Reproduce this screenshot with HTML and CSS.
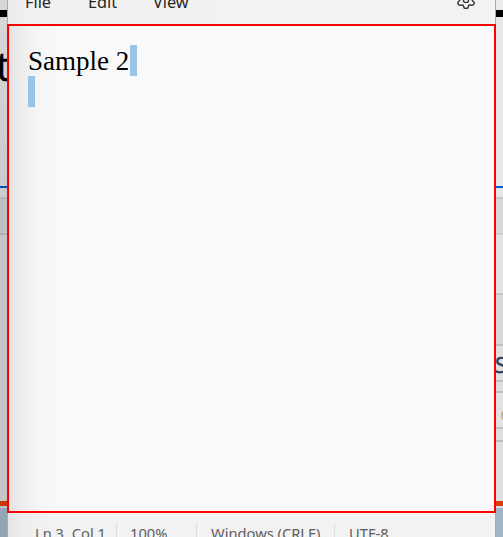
FILE: index.html
```
<!DOCTYPE html>
<html lang="en">
<head>
<meta charset="utf-8">
<title>Notepad</title>
<link rel="stylesheet" href="styles.css">
</head>
<body>
<div class="desktop">
  <aside class="behind left">
    <i class="gap-a"></i><i class="black"></i><span class="letter big">t</span>
    <i class="blue"></i><i class="row-a"></i><i class="row-b"></i><i class="row-c"></i><i class="orange"></i><i class="task"></i>
  </aside>
  <main class="window">
    <nav class="menu">
      <span class="file">File</span><span class="edit">Edit</span><span class="view">View</span>
      <svg class="gear" viewBox="-10 -10 20 20" width="20" height="20"><path d="M-2 7.800Q0 9 2 7.800L2.600 5.600Q3 4.800 4 5L6 5.400Q7.300 5.300 8.200 3.400Q8.500 2.300 7 1.300Q5.600 0 7 -1.300Q8.500-2.300 8.200-3.400Q7.300-5.300 6-5.400L4-5Q3-4.800 2.600-5.600L2-7.800Q0-9-2-7.800L-2.600-5.600Q-3-4.800-4-5L-6-5.400Q-7.300-5.300-8.200-3.400Q-8.500-2.300-7-1.300Q-5.600 0-7 1.300Q-8.500 2.300-8.200 3.400Q-7.300 5.300-6 5.400L-4 5Q-3 4.800-2.600 5.600Z"/><circle r="2.600"/></svg>
    </nav>
    <section class="editor">
      <p class="line"><span class="text">Sample 2</span><span class="sel"></span></p>
      <p class="line"><span class="sel"></span></p>
    </section>
    <footer class="status">
      <span class="pos">Ln 3, Col 1</span><span class="zoom">100%</span><span class="eol">Windows (CRLF)</span><span class="enc">UTF-8</span>
    </footer>
  </main>
  <aside class="behind right">
    <i class="gap-a"></i><i class="black"></i><i class="r-head"></i><i class="blue"></i><i class="row-a"></i><i class="row-b"></i><i class="r1"></i><i class="r2"></i>
    <span class="letter s">S</span><i class="r3"></i><span class="letter o">o</span><i class="r4"></i><i class="r5"></i><i class="orange"></i><i class="task"></i>
  </aside>
</div>
</body>
</html>
```
FILE: styles.css
```
* { box-sizing: border-box; }
body { margin: 0; overflow: hidden; }
.desktop { display: grid; grid-template-columns: 7px 489px 7px; height: 537px; overflow: hidden; }
.behind { display: flex; flex-direction: column; overflow: hidden; height: 537px; }
.behind > * { flex: none; display: block; }
.left { background: #c8c8c8; }
.right { background: #dedede; }
.gap-a { height: 10px; background: #d7d7d7; }
.right .gap-a { background: #ebebeb; }
.black { height: 7px; background: #000; }
.letter { overflow: hidden; white-space: nowrap; }
.big { height: 169px; padding-top: 19px; width: 7px; font: 40px/60px "Open Sans", sans-serif; color: #000; background: linear-gradient(#d7d7d7, #cbcbcb); text-indent: -4px; -webkit-text-stroke: .5px #000; }
.blue { height: 2px; background: #0050bd; }
.right .blue { background: #0060d0; }
.row-a { height: 11px; background: #cbcbcb; border-bottom: 2px solid #b5b5b5; }
.row-b { height: 36px; background: #bfc1c1; border-bottom: 2px solid #b1b1b1; }
.right .row-a { background: #e5e5e5; border-color: #c6c6c6; }
.right .row-b { background: #d8d8d8; border-color: #cecece; }
.row-c { height: 266px; background: #c5c5c5; }
.orange { height: 5px; background: #c7380c; }
.right .orange { background: #dc3b0c; }
.task { height: 31px; background: #91a5b4; border-top: 2px solid #b6c5c5; }
.right .task { background: #a0b6c8; border-color: #d5e1e6; }
.r-head { height: 169px; background: #e8e8e8; }
.r1 { height: 60px; background: #e3e3e3; border-bottom: 2px solid #c4c4c4; }
.r2 { height: 51px; background: #d8d8d8; border-bottom: 2px solid #bfbfbf; }
.s { height: 36px; background: #dfdfdf; border-bottom: 2px solid #bfbfbf; font: 22px/37px "Open Sans", sans-serif; color: #203a5b; text-indent: -1px; -webkit-text-stroke: .5px #203a5b; }
.r3 { height: 11px; border-bottom: 2px solid #bfbfbf; }
.o { height: 36px; border-bottom: 2px solid #bfbfbf; background: #e2e2e2; font: 20px/42px "Open Sans", sans-serif; color: #c5aa86; text-indent: 4px; }
.r4 { height: 13px; border-bottom: 2px solid #bfbfbf; }
.r5 { height: 59px; background: #dedede; }
.window { display: grid; grid-template-rows: 24px 489px 24px; background: #f2f2f2; }
.menu, .status { display: flex; overflow: hidden; border-left: 1px solid #aaa; border-right: 1px solid #aaa; }
.menu { background: linear-gradient(90deg, #ececec, #f1f1f1 25px, #f2f2f2); font: 16.3px/22px "Noto Sans", sans-serif; color: #262626; }
.menu span { margin-top: -9px; }
.file { width: 63px; margin-left: 17px; }
.edit { width: 65px; }
.gear { margin: -10px 19px 0 auto; fill: none; stroke: #333; stroke-width: 1.4; stroke-linejoin: round; }
.editor { border: 2px solid #f00; background: linear-gradient(90deg, #e4e4e4, #ededed 13px, #f5f5f5 28px, #f9f9f9 48px); padding: 19px 0 0 19px; }
.line { display: flex; height: 31px; margin: 0; font: 27px/33px "Liberation Serif", serif; color: #000; }
.text { width: 102px; white-space: nowrap; }
.sel { width: 7px; background: #98c4e8; }
.status { background: linear-gradient(90deg, #e5e5e5, #eee 18px, #f2f2f2 40px); padding: 10px 0 0 27px; font: 14.7px/20px "Noto Sans", sans-serif; color: #606060; }
.status span { height: 24px; white-space: nowrap; flex: none; }
.pos { width: 81px; }
.zoom { width: 80px; padding-left: 13px; border-left: 1px solid #ddd; }
.eol { width: 138px; padding-left: 14px; border-left: 1px solid #ddd; }
.enc { padding-left: 14px; border-left: 1px solid #ddd; }
```
